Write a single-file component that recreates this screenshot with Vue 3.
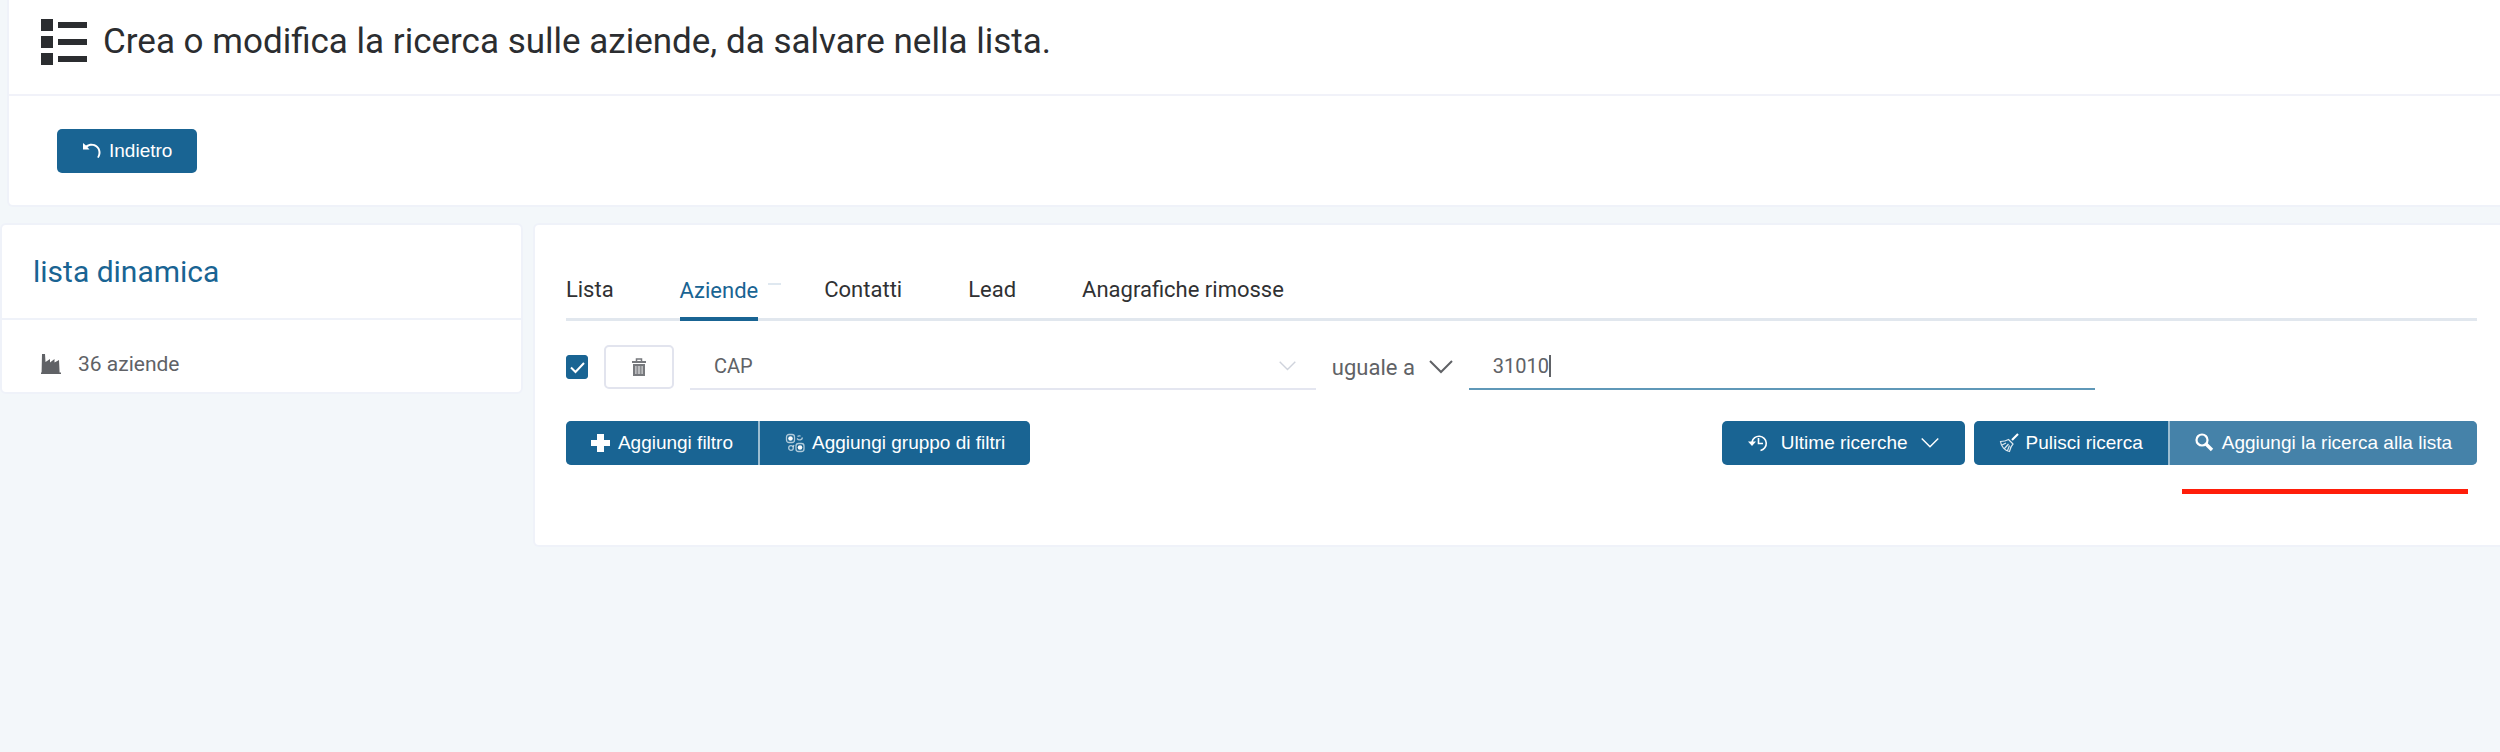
<script setup>
import { ref } from 'vue'

const tabs = ['Lista', 'Aziende', 'Contatti', 'Lead', 'Anagrafiche rimosse']
const activeTab = ref('Aziende')
const enabled = ref(true)
const field = ref('CAP')
const operator = ref('uguale a')
const value = ref('31010')
</script>

<template>
  <div class="page">
    <header class="card header">
      <div class="header-title">
        <svg class="list-icon" viewBox="0 0 46 46" aria-hidden="true">
          <path d="M0 0h12v12H0zM0 17h12v12H0zM0 34h12v12H0zM17 3h29v6H17zM17 20h29v6H17zM17 37h29v6H17z" fill="currentColor" />
        </svg>
        <h1>Crea o modifica la ricerca sulle aziende, da salvare nella lista.</h1>
      </div>
      <div class="header-actions">
        <button type="button" class="btn back">
          <svg class="icon" viewBox="0 0 20 20" aria-hidden="true">
            <path d="M1 2v6.500h6.500L5.500 6.300C10 3 16 5.500 16.500 11c.1 2-.4 3.600-1.300 5.200l1.500.8C18 15 18.600 13 18.500 11 18 4 10 .500 4 4.500z" fill="currentColor" />
          </svg>
          Indietro
        </button>
      </div>
    </header>

    <div class="columns">
      <aside class="card side">
        <h2>lista dinamica</h2>
        <p class="count">
          <svg class="icon" viewBox="0 0 20 20" aria-hidden="true">
            <path d="M1 0h3l.5 8L9 5v3.500L13.500 5v3.500L18 6l.6 12.500H20V20H0v-1.500h.6z" fill="currentColor" />
          </svg>
          36 aziende
        </p>
      </aside>

      <main class="card main">
        <nav class="tabs" role="tablist">
          <button
            v-for="tab in tabs"
            :key="tab"
            type="button"
            role="tab"
            class="tab"
            :class="{ active: tab === activeTab }"
            :aria-selected="tab === activeTab"
            @click="activeTab = tab"
          >
            {{ tab }}
            <span v-if="tab === activeTab" class="badge"></span>
          </button>
        </nav>

        <div class="filter">
          <span class="check">
            <input v-model="enabled" type="checkbox" aria-label="Filtro attivo" />
            <svg v-if="enabled" viewBox="0 0 22 24" aria-hidden="true">
              <path d="M5 12.500l4.500 4.500L18 8" fill="none" stroke="#fff" stroke-width="2" />
            </svg>
          </span>
          <button type="button" class="trash" aria-label="Elimina filtro">
            <svg viewBox="0 0 16 18" aria-hidden="true">
              <path d="M5.500 3V1h5v2" fill="none" stroke="currentColor" stroke-width="1.500" />
              <path d="M1 3h14v2H1z" fill="currentColor" />
              <path d="M3 7h10v10H3z" fill="#bbbcbe" stroke="currentColor" stroke-width="2" />
              <path d="M6.200 7v10M9.800 7v10" stroke="currentColor" stroke-width="1" />
            </svg>
          </button>
          <div class="field">
            <select v-model="field" aria-label="Campo">
              <option>CAP</option>
            </select>
            <svg class="chevron pale" viewBox="0 0 24 14" aria-hidden="true">
              <path d="M1 1l11 11L23 1" fill="none" stroke="currentColor" stroke-width="2" />
            </svg>
          </div>
          <div class="operator">
            <select v-model="operator" aria-label="Operatore">
              <option>uguale a</option>
            </select>
            <svg class="chevron" viewBox="0 0 24 14" aria-hidden="true">
              <path d="M1 1l11 11L23 1" fill="none" stroke="currentColor" stroke-width="2" />
            </svg>
          </div>
          <label class="field value">
            <input v-model="value" type="text" aria-label="Valore" />
            <span class="caret"></span>
          </label>
        </div>

        <div class="actions">
          <div class="group">
            <button type="button" class="btn">
              <svg class="icon" viewBox="0 0 20 20" aria-hidden="true">
                <path d="M6 1h7v6h6v6h-6v6H6v-6H0V7h6z" fill="currentColor" />
              </svg>
              Aggiungi filtro
            </button>
            <button type="button" class="btn">
              <svg class="icon" viewBox="0 0 20 20" aria-hidden="true">
                <g fill="none" stroke="currentColor" stroke-opacity=".65" stroke-width="1.300">
                  <rect x="1.500" y="1.500" width="8" height="8" rx="2.500" />
                  <rect x="11" y="10.500" width="8" height="8" rx="2.500" />
                  <circle cx="6" cy="15" r="2.300" />
                  <path d="M12 5.500c2 2.500 5 1.500 5.500-1M12.500 3.500c1-1 2-.5 3-.5M9 12l-1 2" />
                </g>
                <circle cx="5.500" cy="5.500" r="2.300" fill="currentColor" />
                <circle cx="15" cy="14.500" r="2.300" fill="currentColor" />
              </svg>
              Aggiungi gruppo di filtri
            </button>
          </div>
          <div class="right">
            <button type="button" class="btn recent">
              <svg class="icon" viewBox="0 0 20 20" aria-hidden="true">
                <path d="M4 9a7.200 7.200 0 1 1 8.500 8.500M10.500 5v5.500H15" fill="none" stroke="currentColor" stroke-width="1.600" />
                <path d="M0 8.500h8L4 13z" fill="currentColor" />
              </svg>
              Ultime ricerche
              <svg class="chevron small" viewBox="0 0 24 14" aria-hidden="true">
                <path d="M1 1l11 11L23 1" fill="none" stroke="currentColor" stroke-width="2" />
              </svg>
            </button>
            <div class="group">
              <button type="button" class="btn">
                <svg class="icon" viewBox="0 0 20 20" aria-hidden="true">
                  <path d="M19 1l-6 6" stroke="currentColor" stroke-width="2.200" />
                  <path d="M9.500 6.500l4.500 4.500M9.500 6.500C7 8 4 8.500 1.500 8.500 2 13.500 6 18 10.500 18.500c.5-2.500 1.500-5.500 3.500-7.500zM3 12l4-2M5.500 15.500L9.500 11M8.500 17.500l2-5" fill="none" stroke="currentColor" stroke-opacity=".85" stroke-width="1.200" />
                </svg>
                Pulisci ricerca
              </button>
              <button type="button" class="btn lit">
                <svg class="icon" viewBox="0 0 20 20" aria-hidden="true">
                  <circle cx="7" cy="7" r="5.500" fill="none" stroke="currentColor" stroke-width="2.200" />
                  <path d="M11 11l6 6" stroke="currentColor" stroke-width="3.400" />
                </svg>
                Aggiungi la ricerca alla lista
                <span class="marker"></span>
              </button>
            </div>
          </div>
        </div>
      </main>
    </div>
  </div>
</template>

<style>
body {
  background: #f3f7fa;
}
</style>

<style scoped>
.page {
  font-family: Roboto, "Liberation Sans", sans-serif;
  font-size: 22px;
  color: #606266;
}
.page * {
  box-sizing: border-box;
}
button,
input,
select {
  margin: 0;
  font-family: inherit;
  font-size: inherit;
  color: inherit;
  background: none;
  border: 0;
  padding: 0;
}
select {
  appearance: none;
  outline: 0;
}
.card {
  background: #fff;
  border: 2px solid #eff2f9;
  border-radius: 6px;
}
.header {
  margin-left: 7px;
  border-top: 0;
  border-right: 0;
  border-radius: 0 0 0 6px;
}
.header-title {
  display: flex;
  align-items: center;
  gap: 16px;
  height: 96px;
  padding: 0 32px 10px;
  color: #2b2d30;
  border-bottom: 2px solid #f1f2f9;
}
.list-icon {
  width: 46px;
  height: 46px;
}
h1 {
  margin: 0;
  font-size: 35px;
  font-weight: 400;
  line-height: 44px;
}
.header-actions {
  padding: 33px 48px 32px;
}
.btn {
  position: relative;
  display: flex;
  align-items: center;
  gap: 7px;
  height: 44px;
  padding: 0 25px;
  font-family: "Liberation Sans", Arial, sans-serif;
  font-size: 19px;
  color: #fff;
  background: #196493;
  border-radius: 5px;
  white-space: nowrap;
}
.icon {
  flex: none;
  width: 20px;
  height: 20px;
}
.columns {
  display: grid;
  grid-template-columns: 21fr 79fr;
  align-items: start;
  gap: 10px;
  margin-top: 16px;
}
h2 {
  margin: 0;
  padding: 25px 31px 24px;
  font-size: 30px;
  font-weight: 400;
  line-height: 44px;
  color: #196493;
  border-bottom: 2px solid #eff2f9;
}
.count {
  display: flex;
  align-items: center;
  gap: 17px;
  margin: 0;
  padding: 30px 39px 14px;
  font-size: 21px;
  line-height: 28px;
}
.main {
  padding: 44px 23px 80px 31px;
  border-right: 0;
  border-radius: 6px 0 0 6px;
}
.tabs {
  display: flex;
  gap: 66px;
  border-bottom: 3px solid #e1e7ee;
}
.tab {
  position: relative;
  height: 52px;
  margin-bottom: -3px;
  padding-bottom: 8px;
  color: #303133;
  border-bottom: 4px solid transparent;
}
.tab.active {
  color: #196493;
  border-color: #196493;
  padding-bottom: 6px;
}
.badge {
  position: absolute;
  top: 14px;
  left: calc(100% + 10px);
  width: 13px;
  height: 2px;
  background: #dfe8f0;
}
.filter {
  display: flex;
  align-items: center;
  margin-top: 23px;
  padding-right: 20%;
}
.check {
  position: relative;
  width: 22px;
  height: 24px;
}
.check input {
  display: block;
  appearance: none;
  width: 22px;
  height: 24px;
  border: 1px solid #196493;
  border-radius: 3px;
}
.check input:checked {
  background: #196493;
}
.check svg {
  position: absolute;
  inset: 0;
  pointer-events: none;
}
.trash {
  display: grid;
  place-items: center;
  width: 70px;
  height: 44px;
  margin: 0 16px;
  color: #77797d;
  border: 2px solid #e2e4ee;
  border-radius: 5px;
}
.trash svg {
  width: 16px;
  height: 18px;
}
.field {
  position: relative;
  display: flex;
  flex: 1 1 100px;
  align-items: center;
  height: 46px;
  font-size: 20px;
  border-bottom: 2px solid #e4e6f0;
}
.field select {
  width: 100%;
  height: 44px;
  padding-left: 24px;
}
.chevron {
  width: 24px;
  height: 14px;
  pointer-events: none;
}
.chevron.pale {
  position: absolute;
  right: 20px;
  width: 17px;
  color: #cfd3dc;
}
.chevron.small {
  width: 18px;
}
.operator {
  display: flex;
  align-items: center;
  gap: 14px;
  margin: 0 16px;
}
.operator select {
  field-sizing: content;
}
.value {
  padding-left: 24px;
  border-color: #5f98b8;
}
.value input {
  field-sizing: content;
  outline: 0;
}
.caret {
  width: 2px;
  height: 22px;
  background: #606266;
}
.actions {
  display: flex;
  justify-content: space-between;
  margin-top: 31px;
}
.right {
  display: flex;
  gap: 9px;
}
.group {
  display: flex;
  gap: 2px;
  background: #9cbdd1;
  border-radius: 5px;
}
.group .btn:first-child {
  border-radius: 5px 0 0 5px;
}
.group .btn:last-child {
  border-radius: 0 5px 5px 0;
}
.recent {
  gap: 13px;
  padding: 0 26px;
}
.btn.lit {
  background: #4582a9;
}
.marker {
  position: absolute;
  top: 68px;
  left: 12px;
  right: 9px;
  height: 5px;
  background: #ff1e0a;
}
</style>
